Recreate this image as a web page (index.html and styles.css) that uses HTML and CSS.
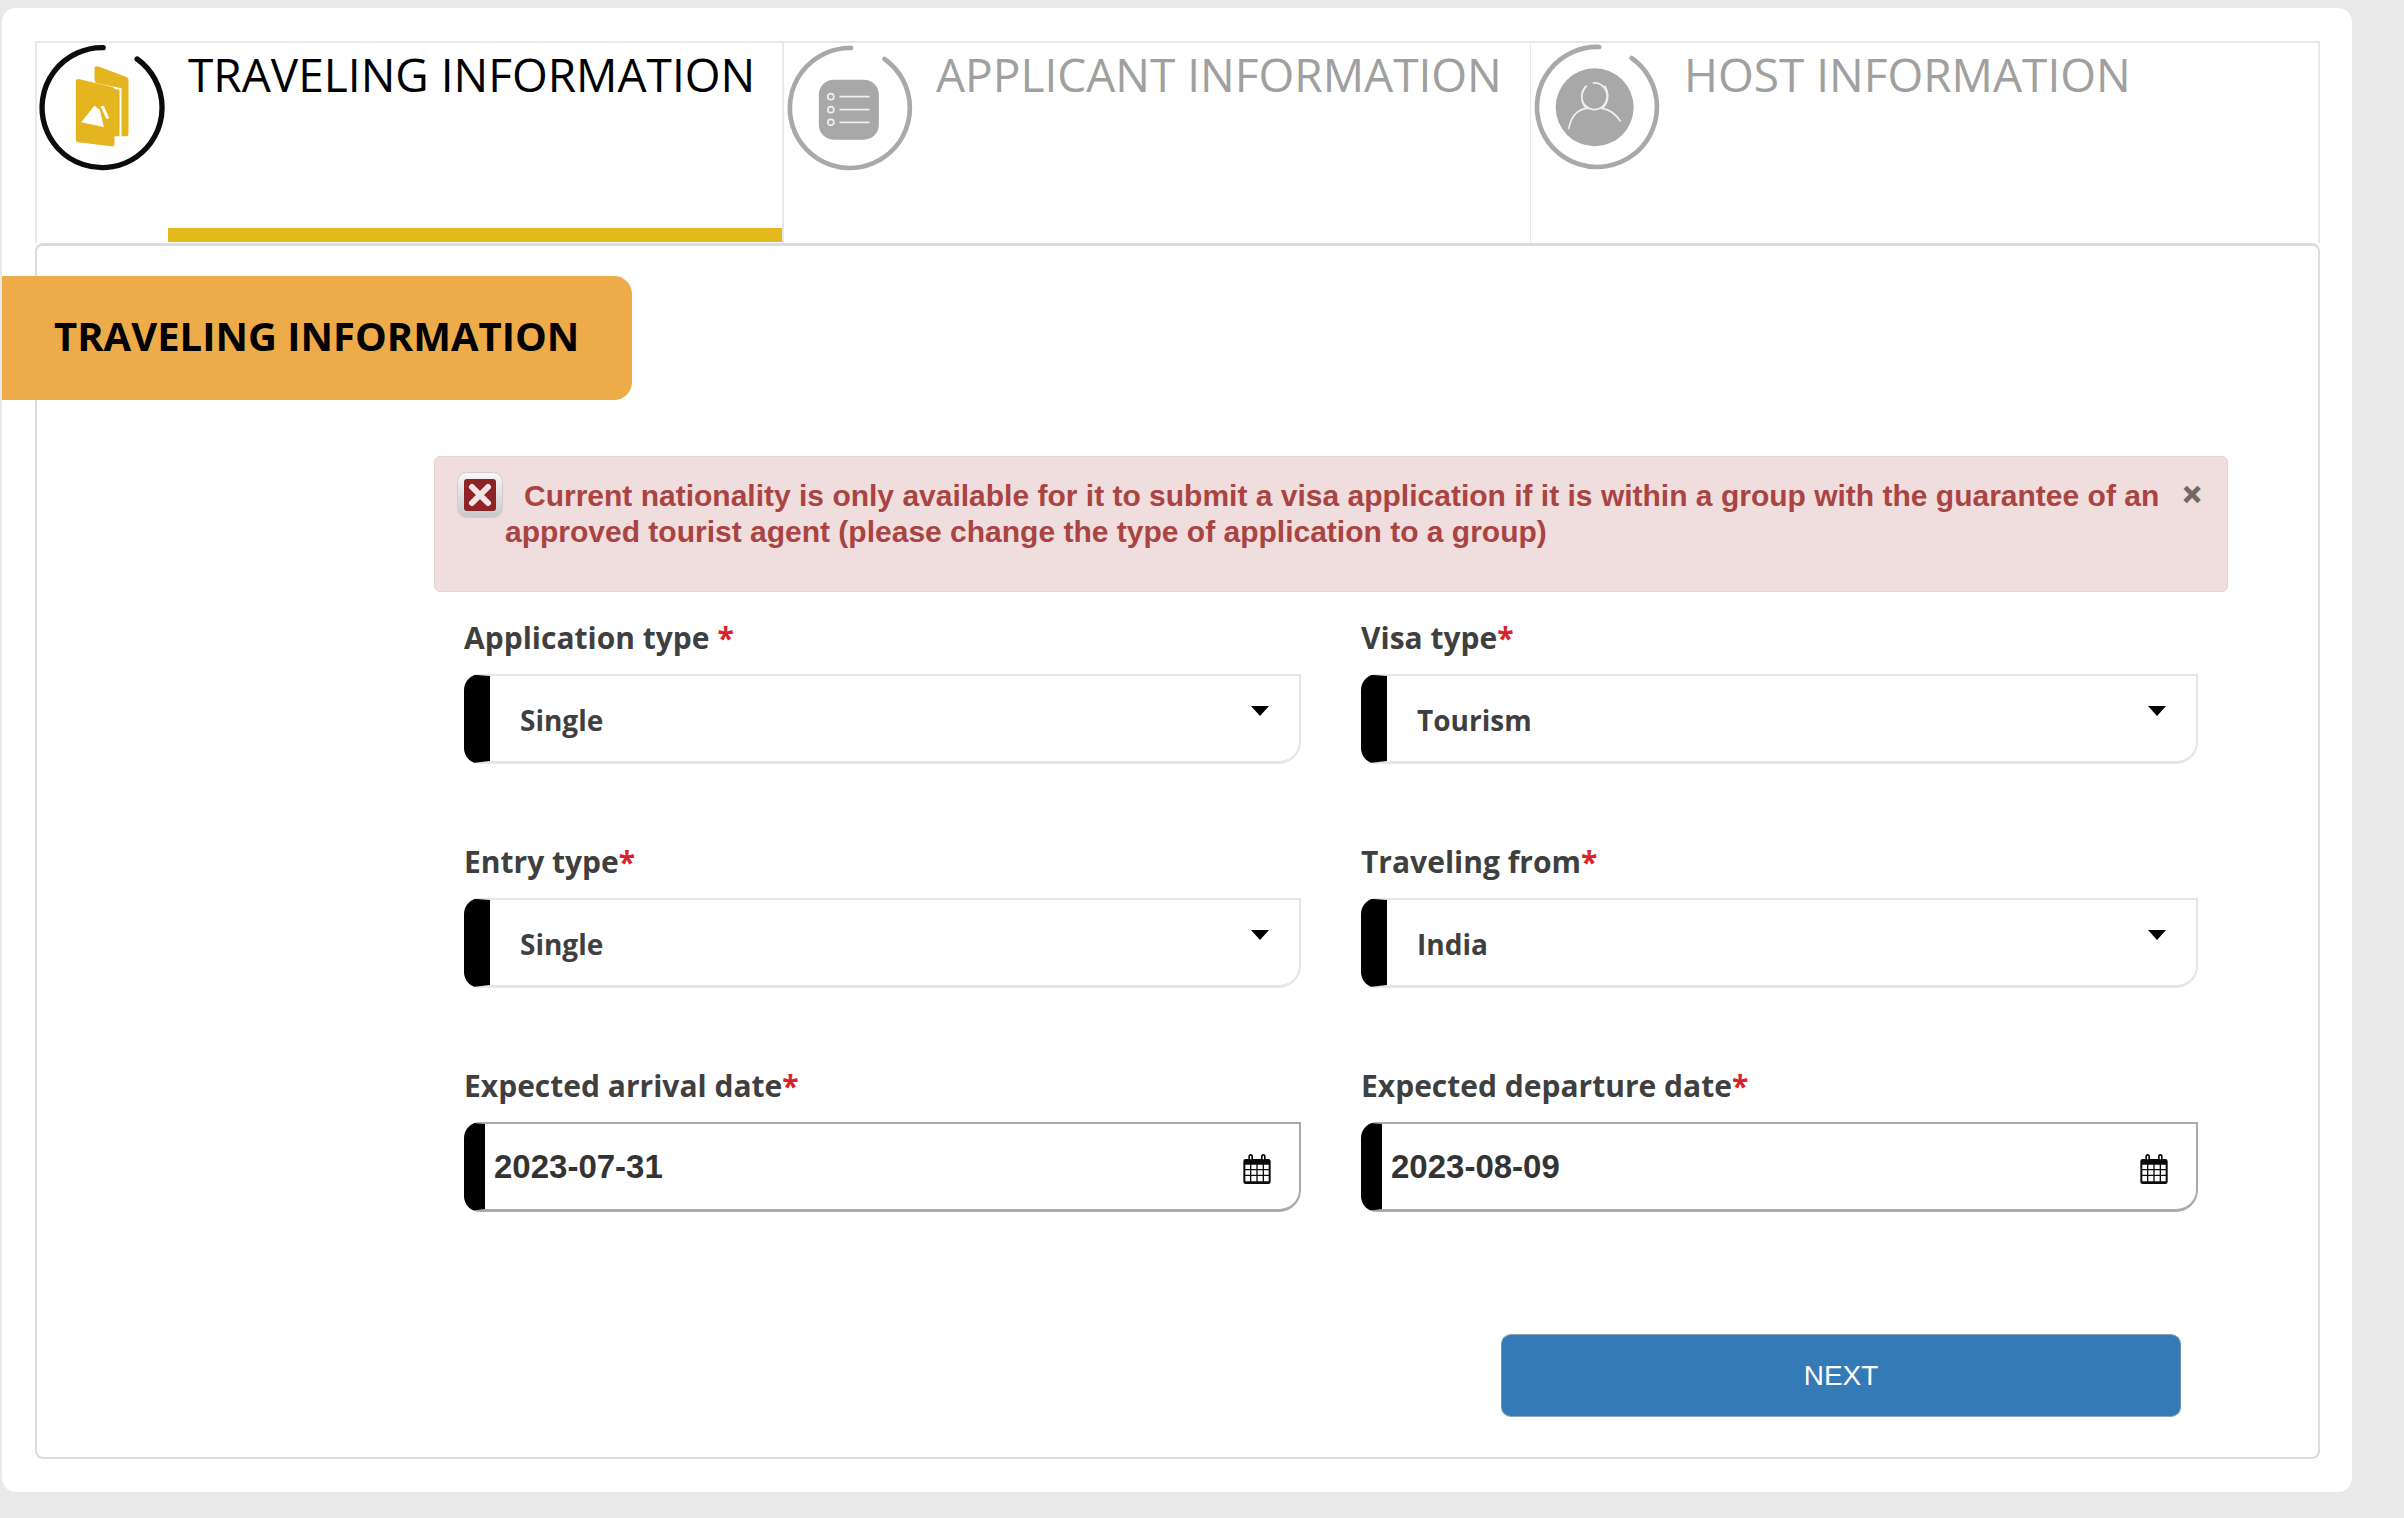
FILE: index.html
```html
<!DOCTYPE html>
<html lang="en">
<head>
<meta charset="utf-8">
<title>Traveling information</title>
<link rel="stylesheet" href="styles.css">
</head>
<body>
<main class="card">
  <nav class="tabs">
    <div class="tab tab-first active">
      <div class="tab-head">
        <svg class="tab-icon" viewBox="49.5 40 390 390" aria-hidden="true">
          <path class="ring" d="M248 54A180 180 0 1 0 350 88"/>
          <path class="folder" d="M222 150V114Q224 108 232 110L318 142Q324 145 324 150V314Q324 320 318 320H280Z"/>
          <path class="folder-gap" d="M200 158L300 178V322"/>
          <path class="folder" d="M174 148L276 172Q282 174 282 180V344Q282 352 272 350L172 338Q166 336 166 330V154Q166 148 174 148Z"/>
          <path class="folder-pic" d="M182 278L222 228L238 240L250 292Z"/>
          <path class="folder-pic" d="M240 230L250 228L266 266L258 268Z"/>
        </svg>
        <span class="tab-label">TRAVELING INFORMATION</span>
      </div>
      <div class="tab-bar"></div>
    </div>
    <div class="tab tab-second">
      <div class="tab-head">
        <svg class="tab-icon" viewBox="43.5 40 390 390" aria-hidden="true">
          <path class="ring" d="M245 55A180 180 0 1 0 345 88"/>
          <rect class="glyph" x="148" y="150" width="180" height="180" rx="45"/>
          <g class="glyph-line">
            <circle cx="184" cy="201" r="9"/><circle cx="184" cy="240" r="9"/><circle cx="184" cy="278" r="9"/>
            <path d="M210 201H300M210 240H300M210 278H300"/>
          </g>
        </svg>
        <span class="tab-label">APPLICANT INFORMATION</span>
      </div>
    </div>
    <div class="tab tab-third">
      <div class="tab-head">
        <svg class="tab-icon" viewBox="33 40 390 390" aria-hidden="true">
          <path class="ring" d="M238 52A180 180 0 1 0 335 85"/>
          <g class="person">
            <circle class="glyph" cx="228" cy="233" r="117"/>
            <g class="glyph-line">
              <path d="M222 160A38 40 0 1 1 204 168C184 190 186 222 204 236C172 240 156 266 150 298"/>
              <path d="M258 168C272 190 270 222 250 236C274 240 294 256 306 276"/>
            </g>
          </g>
        </svg>
        <span class="tab-label">HOST INFORMATION</span>
      </div>
    </div>
  </nav>

  <section class="panel">
    <h2 class="ribbon">TRAVELING INFORMATION</h2>

    <div class="alert">
      <svg class="alert-icon" viewBox="0 0 46 46" aria-hidden="true">
        <defs>
          <linearGradient id="frameFill" x1="0" y1="0" x2="0" y2="1"><stop offset="0" stop-color="#f8f8f8"/><stop offset="1" stop-color="#c8c8c8"/></linearGradient>
        </defs>
        <rect x="0.5" y="0.5" width="45" height="45" rx="9" fill="url(#frameFill)" stroke="#d4cccc"/>
        <rect x="7" y="7" width="32" height="32" rx="3" fill="#8e2326"/>
        <path d="M15 15L31 31M31 15L15 31" stroke="#f1e4e4" stroke-width="6" stroke-linecap="round"/>
      </svg>
      <p class="alert-text">Current nationality is only available for it to submit a visa application if it is within a group with the guarantee of an approved tourist agent (please change the type of application to a group)</p>
      <span class="alert-close">×</span>
    </div>

    <div class="form-grid">
      <div class="field">
        <div class="field-label">Application type <span class="req">*</span></div>
        <div class="select"><span>Single</span><i class="caret"></i></div>
      </div>
      <div class="field">
        <div class="field-label">Visa type<span class="req">*</span></div>
        <div class="select"><span>Tourism</span><i class="caret"></i></div>
      </div>
      <div class="field">
        <div class="field-label">Entry type<span class="req">*</span></div>
        <div class="select"><span>Single</span><i class="caret"></i></div>
      </div>
      <div class="field">
        <div class="field-label">Traveling from<span class="req">*</span></div>
        <div class="select"><span>India</span><i class="caret"></i></div>
      </div>
      <div class="field">
        <div class="field-label">Expected arrival date<span class="req">*</span></div>
        <div class="date"><span>2023-07-31</span>
          <svg class="cal" viewBox="0 0 84 90" aria-hidden="true"><path d="M8 15H16V8Q16 0 23 0T30 8V15H54V8Q54 0 61 0T68 8V15H76Q83 15 83 22V83Q83 90 76 90H8Q1 90 1 83V22Q1 15 8 15Z"/><path class="cal-hole" d="M21 16V8Q21 5 23 5T25 8V16ZM59 16V8Q59 5 61 5T63 8V16Z"/><path class="cal-cells" d="M7 32H21V45H7ZM25 32H40V45H25ZM44 32H59V45H44ZM63 32H77V45H63ZM7 49H21V62H7ZM25 49H40V62H25ZM44 49H59V62H44ZM63 49H77V62H63ZM7 66H21V82H7ZM25 66H40V82H25ZM44 66H59V82H44ZM63 66H77V82H63Z"/></svg>
        </div>
      </div>
      <div class="field">
        <div class="field-label">Expected departure date<span class="req">*</span></div>
        <div class="date"><span>2023-08-09</span>
          <svg class="cal" viewBox="0 0 84 90" aria-hidden="true"><path d="M8 15H16V8Q16 0 23 0T30 8V15H54V8Q54 0 61 0T68 8V15H76Q83 15 83 22V83Q83 90 76 90H8Q1 90 1 83V22Q1 15 8 15Z"/><path class="cal-hole" d="M21 16V8Q21 5 23 5T25 8V16ZM59 16V8Q59 5 61 5T63 8V16Z"/><path class="cal-cells" d="M7 32H21V45H7ZM25 32H40V45H25ZM44 32H59V45H44ZM63 32H77V45H63ZM7 49H21V62H7ZM25 49H40V62H25ZM44 49H59V62H44ZM63 49H77V62H63ZM7 66H21V82H7ZM25 66H40V82H25ZM44 66H59V82H44ZM63 66H77V82H63Z"/></svg>
        </div>
      </div>
    </div>

    <div class="actions"><button class="next" type="button">NEXT</button></div>
  </section>
</main>
</body>
</html>
```

FILE: styles.css
```css
* { box-sizing: border-box; }
html, body { margin: 0; padding: 0; }
body {
  background: #e9e9e9;
  font-family: "Open Sans", "Liberation Sans", sans-serif;
  color: #3f3f3f;
  height: 1518px;
  overflow: hidden;
}
.card {
  margin: 8px 52px 0 2px;
  height: 1484px;
  padding: 33px 32px 33px 33px;
  background: #fff;
  border-radius: 14px;
}
.tabs {
  display: flex;
  height: 202px;
  border-top: 2px solid #e8e8e8;
  border-left: 2px solid #e8e8e8;
  border-right: 2px solid #e8e8e8;
}
.tab {
  display: flex;
  flex-direction: column;
  justify-content: space-between;
}
.tab-first { width: 747px; border-right: 2px solid #e8e8e8; }
.tab-second { width: 747px; border-right: 1px solid #e8e8e8; }
.tab-third { flex: 1; }
.tab-head { display: flex; align-items: flex-start; }
.tab-icon { width: 130px; height: 130px; flex: none; filter: blur(0.5px); }
.tab-label {
  font-size: 46px;
  line-height: 60px;
  margin-left: 21px;
  color: #a0a09e;
  white-space: nowrap;
  margin-top: 1px;
}
.tab-second .tab-label { margin-left: 22px; }
.tab-third .tab-label { margin-left: 23px; }
.active .tab-label { color: #000; }
.tab-bar { height: 14px; margin: 0 0 1px 131px; background: #e4b91c; }
.ring { fill: none; stroke: #a9a9a9; stroke-width: 14; stroke-linecap: round; }
.active .ring { stroke: #0c0c0c; stroke-width: 16; }
.folder { fill: #e5b51f; }
.folder-gap { fill: none; stroke: #fff; stroke-width: 6; }
.folder-pic { fill: #fff; }
.glyph { fill: #a8a8a8; }
.glyph-line { fill: none; stroke: #efefef; stroke-width: 5; }
.person { transform: translateX(-4px); }

.panel {
  height: 1216px;
  border: 2px solid #dcdcdc;
  border-top-width: 3px;
  border-radius: 8px;
  background: #fff;
}
.ribbon {
  width: 630px;
  height: 124px;
  margin: 30px 0 0 -35px;
  padding-left: 52px;
  background: #edab49;
  border-radius: 0 18px 18px 0;
  color: #000;
  font-size: 40px;
  font-weight: 700;
  line-height: 120px;
  white-space: nowrap;
}
.alert {
  display: flex;
  align-items: flex-start;
  width: 1794px;
  height: 136px;
  margin: 56px 0 0 397px;
  padding: 15px 26px 0 22px;
  background: #f0dddd;
  border: 1px solid #e9d2d4;
  border-radius: 6px;
}
.alert-icon { width: 46px; height: 46px; flex: none; filter: blur(0.4px); }
.alert-text {
  flex: 1;
  margin: 6px 0 0 2px;
  color: #a94442;
  font-family: "Liberation Sans", Arial, sans-serif;
  font-size: 30px;
  font-weight: 700;
  line-height: 36px;
  text-indent: 19px;
}
.alert-close {
  flex: none;
  margin-left: 12px;
  color: #6f6a6a;
  font-family: "Liberation Sans", Arial, sans-serif;
  font-size: 31px;
  font-weight: 700;
  line-height: 46px;
  -webkit-text-stroke: 1.2px #6f6a6a;
}
.form-grid {
  display: grid;
  grid-template-columns: 837px 837px;
  column-gap: 60px;
  row-gap: 78px;
  margin: 26px 0 0 427px;
}
.field-label {
  height: 40px;
  margin-bottom: 16px;
  font-size: 30px;
  font-weight: 700;
  line-height: 40px;
  color: #3f3f3f;
}
.req { color: #d9232a; }
.select, .date {
  display: flex;
  align-items: center;
  justify-content: space-between;
  height: 90px;
  background: #fff;
  border-style: solid;
  border-radius: 16px 0 22px 16px;
}
.select {
  padding: 2px 30px 0 30px;
  border-width: 2px 2px 3px 26px;
  border-color: #e6e6e6 #e6e6e6 #e6e6e6 #000;
  font-size: 28px;
  font-weight: 700;
}
.caret {
  align-self: flex-start;
  width: 0;
  height: 0;
  margin-top: 28px;
  border-left: 9px solid transparent;
  border-right: 9px solid transparent;
  border-top: 10px solid #000;
}
.date {
  padding: 0 28px 0 9px;
  border-width: 2px 2px 3px 21px;
  border-color: #aaa #aaa #aaa #000;
  font-family: "Liberation Sans", Arial, sans-serif;
  font-size: 33px;
  font-weight: 700;
  color: #333;
}
.cal { width: 28px; height: 30px; margin-top: 4px; }
.cal path { fill: #0b0b0b; }
.cal .cal-hole, .cal .cal-cells { fill: #fff; }
.actions {
  display: flex;
  justify-content: flex-end;
  margin: 122px 137px 0 0;
}
.next {
  width: 680px;
  height: 83px;
  border: 1px solid #6f93ad;
  border-top-color: #8fa5b3;
  border-bottom-color: #8fa5b3;
  border-radius: 10px;
  background: #337ab7;
  color: #fff;
  font-family: "Liberation Sans", Arial, sans-serif;
  font-size: 28px;
  padding: 0;
}
```
